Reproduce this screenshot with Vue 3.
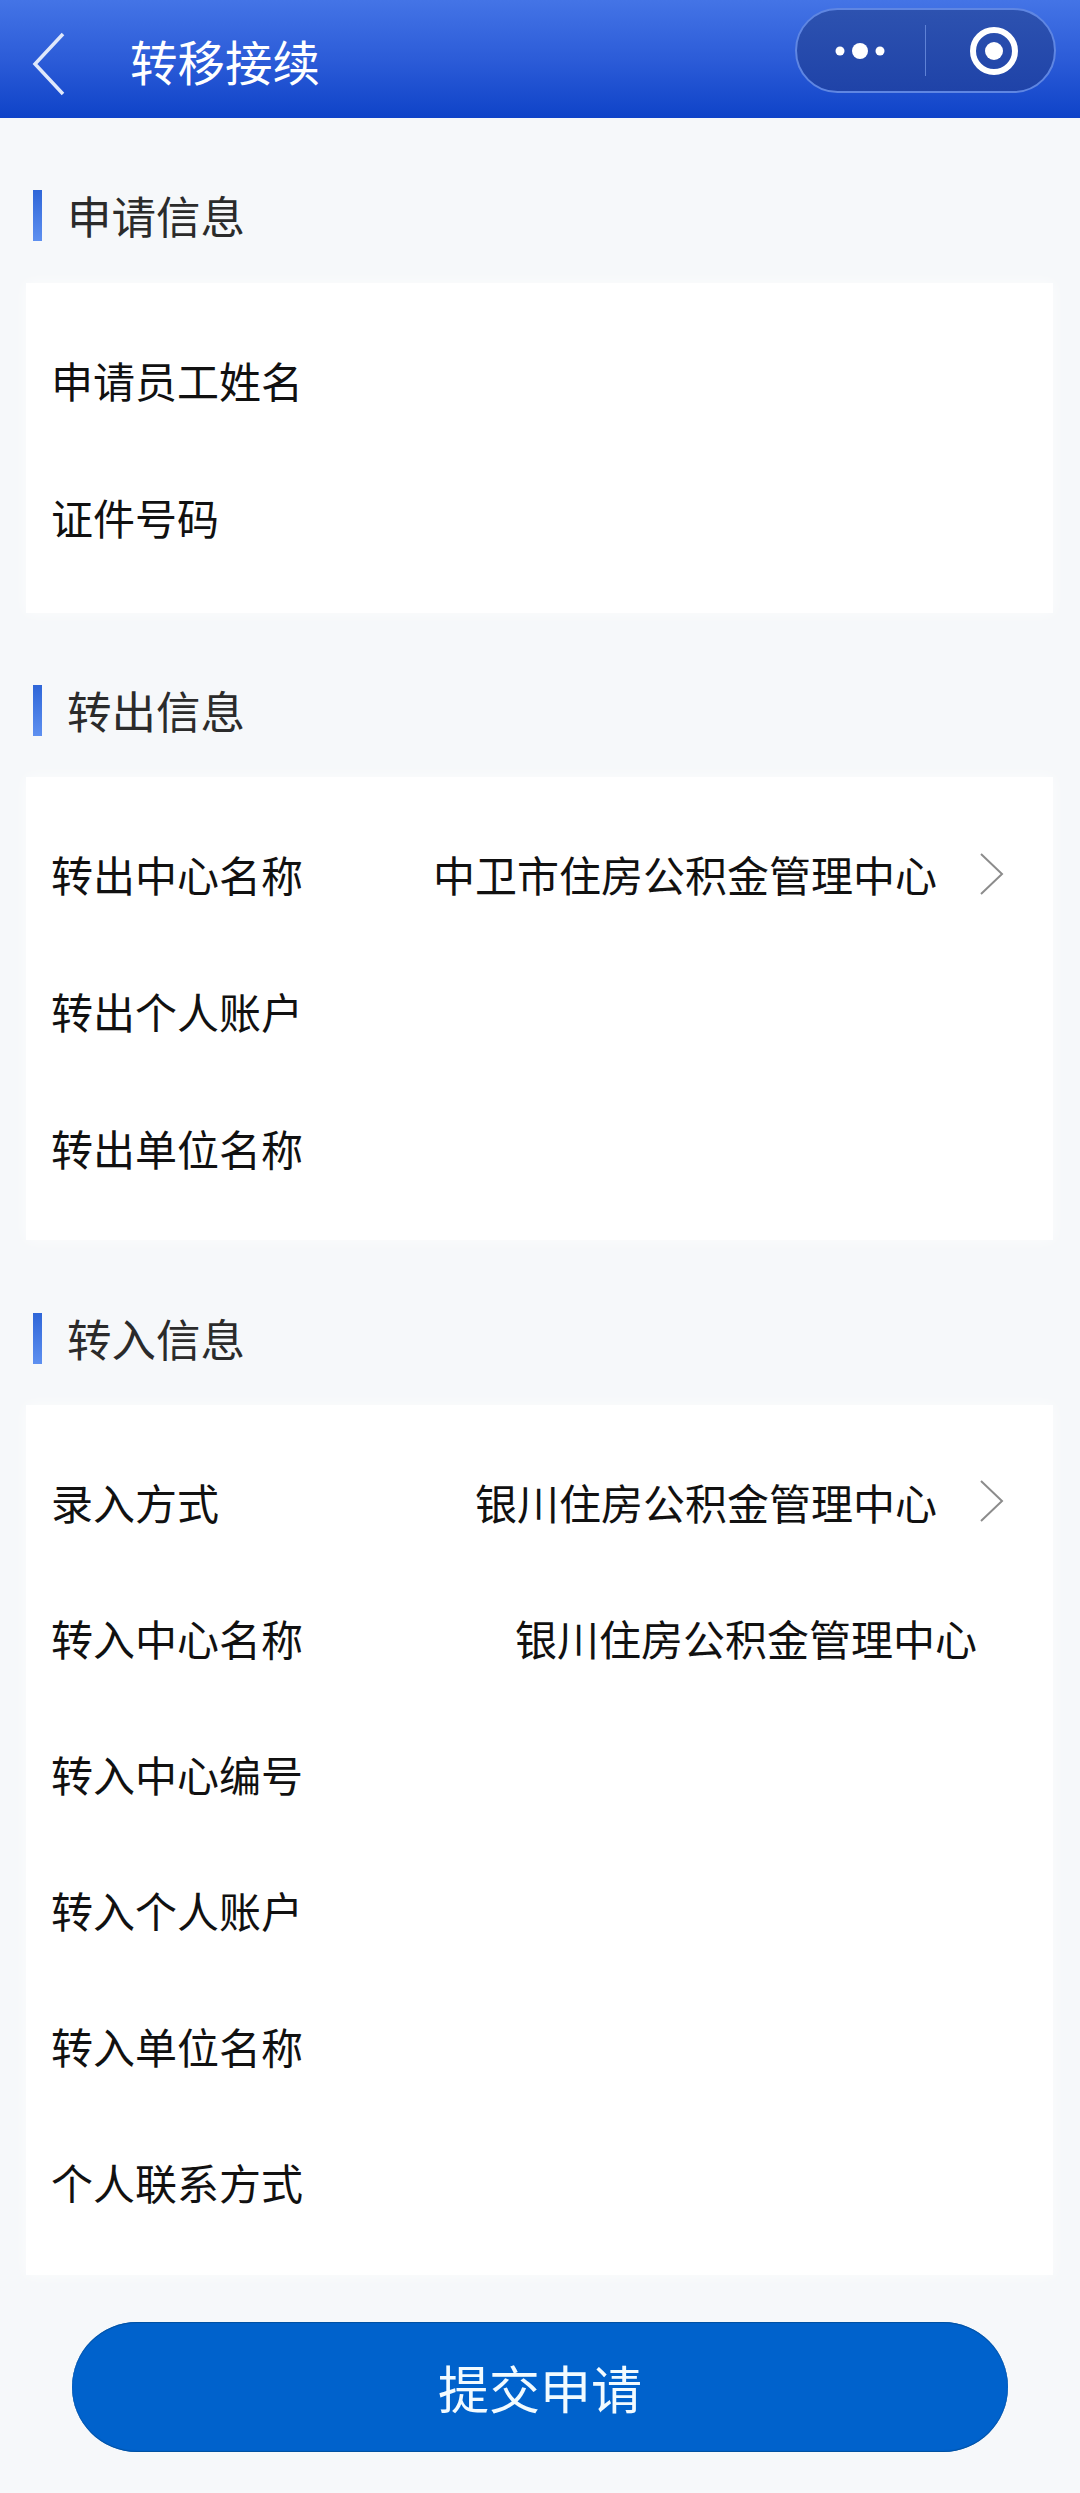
<script setup>
const sections = [
  {
    title: "申请信息",
    rows: [{ label: "申请员工姓名" }, { label: "证件号码" }],
  },
  {
    title: "转出信息",
    rows: [
      { label: "转出中心名称", value: "中卫市住房公积金管理中心", arrow: true },
      { label: "转出个人账户" },
      { label: "转出单位名称" },
    ],
  },
  {
    title: "转入信息",
    rows: [
      { label: "录入方式", value: "银川住房公积金管理中心", arrow: true },
      { label: "转入中心名称", value: "银川住房公积金管理中心" },
      { label: "转入中心编号" },
      { label: "转入个人账户" },
      { label: "转入单位名称" },
      { label: "个人联系方式" },
    ],
  },
];
</script>

<template>
  <div class="page">
    <header class="nav">
      <svg class="back" width="36" height="66" viewBox="0 0 36 66">
        <path d="M32 3 L4 33 L32 63" fill="none" stroke="#dfe8fb" stroke-width="3.5" />
      </svg>
      <span class="nav-title">转移接续</span>
      <div class="capsule">
        <div class="capsule-left">
          <svg width="56" height="20" viewBox="0 0 56 20">
            <circle cx="7" cy="10" r="4.5" fill="#fff" />
            <circle cx="27" cy="10" r="8" fill="#fff" />
            <circle cx="47" cy="10" r="4.5" fill="#fff" />
          </svg>
        </div>
        <div class="capsule-right">
          <svg width="50" height="50" viewBox="0 0 50 50">
            <circle cx="25" cy="25" r="21" fill="none" stroke="#fff" stroke-width="6" />
            <circle cx="25" cy="25" r="9" fill="#fff" />
          </svg>
        </div>
      </div>
    </header>

    <main class="content">
      <section v-for="sec in sections" :key="sec.title" class="section">
        <div class="sec-head">
          <i class="sec-bar"></i>
          <h2 class="sec-title">{{ sec.title }}</h2>
        </div>
        <div class="card">
          <div v-for="row in sec.rows" :key="row.label" class="row">
            <span class="label">{{ row.label }}</span>
            <span class="value" :class="{ plain: !row.arrow }">{{ row.value }}</span>
            <svg v-if="row.arrow" class="arrow" width="26" height="42" viewBox="0 0 26 42">
              <path d="M2 1 L23 21 L2 41" fill="none" stroke="#8c8c8c" stroke-width="2" />
            </svg>
          </div>
        </div>
      </section>
      <button class="submit">提交申请</button>
    </main>
  </div>
</template>

<style>
html,
body {
  margin: 0;
  background: #f6f8fa;
}
</style>

<style scoped>
.page {
  width: 1080px;
  height: 2493px;
  overflow: hidden;
  background: #f6f8fa;
  font-family: "Noto Sans CJK SC", "Liberation Sans", sans-serif;
}

.nav {
  display: flex;
  align-items: center;
  height: 118px;
  padding: 0 24px 0 31px;
  box-sizing: border-box;
  background: linear-gradient(#4474e6, #2c5cd8 50%, #0f43c8);
}

.back {
  margin-top: 10px;
}

.nav-title {
  margin-left: 63px;
  margin-top: 4px;
  font-size: 47.5px;
  line-height: 60px;
  color: #fff;
}

.capsule {
  display: flex;
  align-items: center;
  margin-left: auto;
  margin-bottom: 17px;
  width: 261px;
  height: 85px;
  box-sizing: border-box;
  border: 2px solid #5f86e2;
  border-radius: 43px;
  background: linear-gradient(#2d52b0, #1f43a8);
}

.capsule-left {
  display: flex;
  justify-content: center;
  align-items: center;
  width: 129px;
  height: 51px;
  box-sizing: border-box;
  border-right: 1px solid #5f82d6;
}

.capsule-right {
  flex: 1;
  display: flex;
  justify-content: center;
  padding-left: 7px;
}

.content {
  padding: 72px 27px 0 26px;
}

.section {
  margin-bottom: 72px;
}

.section:nth-child(2) {
  margin-bottom: 73px;
}

.section:nth-child(3) {
  margin-bottom: 47px;
}

.sec-head {
  display: flex;
  align-items: center;
  height: 51px;
  margin-bottom: 41px;
  padding-left: 7px;
}

.section:first-child .sec-head {
  margin-bottom: 42px;
}

.sec-bar {
  width: 9px;
  height: 51px;
  background: linear-gradient(#2f66d8, #5e90f0);
}

.sec-title {
  margin: -2px 0 0 25px;
  font-size: 44.5px;
  font-weight: 400;
  line-height: 51px;
  color: #2b2b2b;
}

.card {
  padding: 30px 0 22px;
  background: #fff;
  box-shadow: 0 0 14px rgba(255, 255, 255, 0.7);
}

.section:first-child .card {
  padding-bottom: 26px;
}

.section:nth-child(3) .card {
  padding: 30px 0 24px;
}

.row {
  display: flex;
  align-items: center;
  height: 137px;
  padding: 0 0 4px 25px;
  box-sizing: border-box;
  font-size: 42px;
  color: #111;
}

.section:nth-child(3) .row {
  height: 136px;
}

.label {
  flex: none;
}

.value {
  margin-left: auto;
}

.value.plain {
  margin-right: 76px;
}

.arrow {
  margin: 0 48px 0 42px;
}

.submit {
  display: block;
  width: 936px;
  height: 130px;
  margin-left: 46px;
  padding: 0 0 1px;
  border: 0;
  border-radius: 65px;
  background: #0062cc;
  box-shadow: inset 0 1px 1px #00509f, inset 0 -1px 1px #00509f;
  font-family: inherit;
  font-size: 51px;
  color: #f2fbff;
}
</style>
